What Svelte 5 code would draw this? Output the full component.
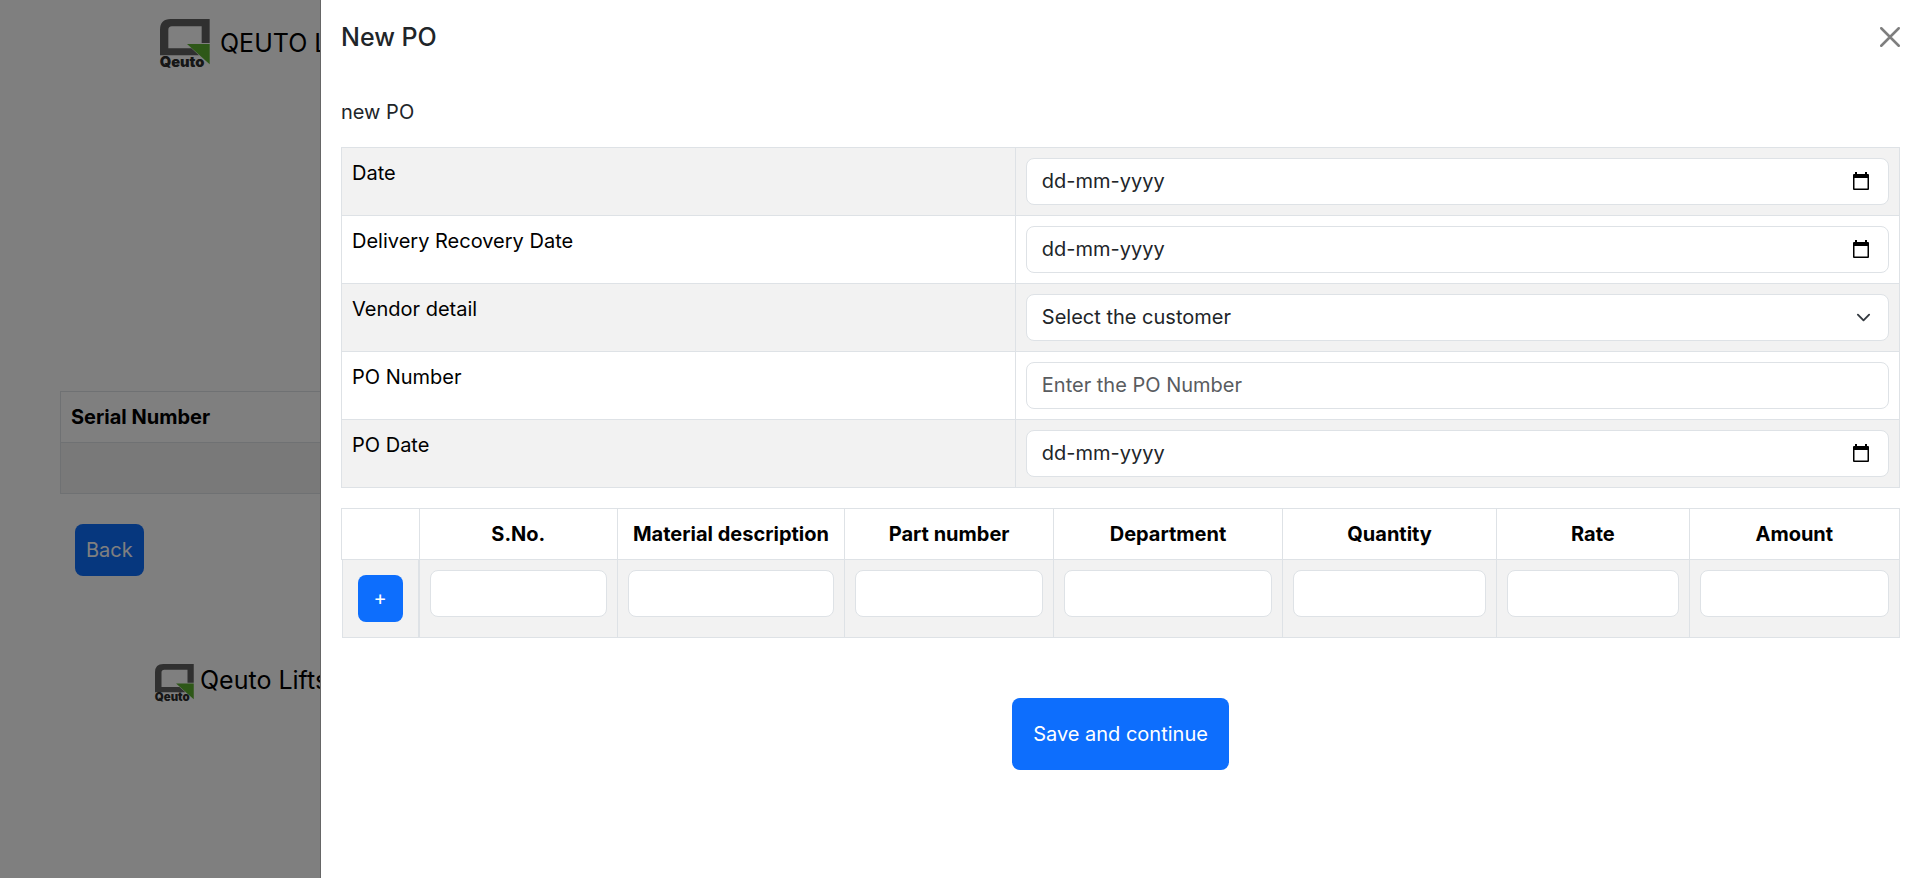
<script>
  const fields = [
    { id: 'date', label: 'Date', kind: 'date' },
    { id: 'recovery', label: 'Delivery Recovery Date', kind: 'date' },
    { id: 'vendor', label: 'Vendor detail', kind: 'select' },
    { id: 'number', label: 'PO Number', kind: 'text' },
    { id: 'po-date', label: 'PO Date', kind: 'date' }
  ];

  const columns = [
    { label: 'S.No.', width: 12.7 },
    { label: 'Material description', width: 14.6 },
    { label: 'Part number', width: 13.4 },
    { label: 'Department', width: 14.7 },
    { label: 'Quantity', width: 13.75 },
    { label: 'Rate', width: 12.35 },
    { label: 'Amount', width: 13.5 }
  ];

  let rows = $state([0]);
  let open = $state(true);
</script>

{#snippet logo()}
  <svg class="logo" viewBox="0 0 150 150" aria-hidden="true">
    <path fill="#606060" d="M32 0H149V72H125V22H36Q25 22 25 33V88H94L117 109H0V32Q0 0 32 0Z" />
    <path fill="#5cb030" d="M81 75H149V136Z" />
    <text x="-1" y="144" font-size="44" font-weight="900" fill="#2c2c2c">Qeuto</text>
  </svg>
{/snippet}

<div class="page">
  <header class="brand">
    {@render logo()}
    <span>QEUTO L</span>
  </header>

  <main>
    <table class="grid">
      <thead><tr><th>Serial Number</th></tr></thead>
      <tbody><tr><td class="blank"></td></tr></tbody>
    </table>
    <button class="btn back" type="button">Back</button>
  </main>

  <footer class="brand small">
    {@render logo()}
    <span>Qeuto Lifts</span>
  </footer>
</div>

{#if open}
  <div class="backdrop"></div>
  <section class="panel" role="dialog" aria-labelledby="panel-title">
    <div class="panel-head">
      <h5 id="panel-title">New PO</h5>
      <button class="close" type="button" aria-label="Close" onclick={() => (open = false)}>
        <svg viewBox="0 0 16 16" aria-hidden="true">
          <path d="M1 1L15 15M15 1L1 15" fill="none" stroke="#000" stroke-width="2" stroke-linecap="round" />
        </svg>
      </button>
    </div>

    <form class="panel-body" onsubmit={(e) => e.preventDefault()}>
      <p>new PO</p>

      <table class="grid details">
        <tbody>
          {#each fields as field}
            <tr>
              <td class="name"><label for={field.id}>{field.label}</label></td>
              <td>
                {#if field.kind === 'select'}
                  <div class="control">
                    <select id={field.id}>
                      <option>Select the customer</option>
                    </select>
                    <svg class="chevron" viewBox="0 0 16 16" aria-hidden="true">
                      <path d="M2 5l6 6 6-6" fill="none" stroke="#343a40" stroke-width="2" stroke-linecap="round" stroke-linejoin="round" />
                    </svg>
                  </div>
                {:else if field.kind === 'date'}
                  <div class="control">
                    <input class="date" id={field.id} type="text" placeholder="dd-mm-yyyy" />
                    <button class="calendar" type="button" aria-label="Choose a date">
                      <svg viewBox="0 0 16 18" aria-hidden="true">
                        <path d="M2 0h2v2h8V0h2v2h1q1 0 1 1v14q0 1-1 1H1q-1 0-1-1V3q0-1 1-1h1zM1.5 6v10.5h13V6z" fill="#000" fill-rule="evenodd" />
                      </svg>
                    </button>
                  </div>
                {:else}
                  <input id={field.id} type="text" placeholder="Enter the PO Number" />
                {/if}
              </td>
            </tr>
          {/each}
        </tbody>
      </table>

      <table class="grid items">
        <colgroup>
          <col style="width: 5%" />
          {#each columns as column}
            <col style="width: {column.width}%" />
          {/each}
        </colgroup>
        <thead>
          <tr>
            <th></th>
            {#each columns as column}
              <th>{column.label}</th>
            {/each}
          </tr>
        </thead>
        <tbody>
          {#each rows as row}
            <tr>
              <td class="add">
                <div>
                  <button class="btn" type="button" aria-label="Add row" onclick={() => rows.push(rows.length)}>+</button>
                </div>
              </td>
              {#each columns as column}
                <td><input type="text" aria-label={column.label} /></td>
              {/each}
            </tr>
          {/each}
        </tbody>
      </table>

      <button class="btn save" type="submit">Save and continue</button>
    </form>
  </section>
{/if}

<style>
  :global(body) {
    margin: 0;
    background: #fff;
    color: #212529;
    font: 20px/30px Inter, 'Liberation Sans', sans-serif;
  }

  :global(*) {
    box-sizing: border-box;
  }

  .page {
    color: #000;
  }

  .brand {
    display: flex;
    gap: 10px;
    padding: 19px 160px 0;
    font-size: 25px;
    line-height: 48px;
    white-space: nowrap;
  }

  .brand .logo {
    width: 50px;
    height: 50px;
    overflow: visible;
  }

  main {
    padding: 322px 60px 0;
  }

  .brand.small {
    gap: 6px;
    padding: 88px 155px 0;
    line-height: 32px;
  }

  .brand.small .logo {
    width: 39px;
    height: 39px;
  }

  .grid {
    width: 100%;
    border-collapse: collapse;
    color: #000;
  }

  th,
  td {
    padding: 10px;
    border: 1px solid #dee2e6;
    text-align: left;
    vertical-align: top;
  }

  th {
    font-weight: 700;
  }

  .blank {
    height: 51px;
    background: #f2f2f2;
  }

  .btn {
    border: 0;
    border-radius: 8px;
    background: #0d6efd;
    color: #fff;
    font: inherit;
    cursor: pointer;
  }

  .back {
    margin: 30px 15px 0;
    padding: 11px;
  }

  .backdrop {
    position: fixed;
    inset: 0;
    background: rgba(0, 0, 0, 0.5);
  }

  .panel {
    position: fixed;
    inset: 0 0 0 auto;
    width: calc(100% * 5 / 6);
    border-left: 1px solid #666;
    background: #fff;
    overflow: auto;
  }

  .panel-head {
    display: flex;
    align-items: center;
    justify-content: space-between;
    padding: 18px 20px;
  }

  h5 {
    margin: 0;
    font-size: 25px;
    font-weight: 500;
    line-height: 38px;
  }

  .close {
    display: flex;
    padding: 0;
    border: 0;
    background: none;
    opacity: 0.5;
    cursor: pointer;
  }

  .close svg {
    width: 20px;
    height: 20px;
  }

  .panel-body {
    padding: 23px 20px;
  }

  p {
    margin: 0 0 20px;
  }

  .name {
    width: 43.25%;
  }

  .details tr:nth-child(odd) td,
  .items td {
    background: #f2f2f2;
  }

  input,
  select {
    display: block;
    width: 100%;
    height: 47px;
    padding: 0 15px 2px;
    border: 1px solid #dee2e6;
    border-radius: 8px;
    background: #fff;
    color: #212529;
    font: inherit;
    appearance: none;
  }

  input::placeholder {
    color: #595c5f;
    opacity: 1;
  }

  .date::placeholder {
    color: #212529;
  }

  .control {
    display: grid;
    align-items: center;
  }

  .control > * {
    grid-area: 1 / 1;
  }

  .chevron,
  .calendar {
    justify-self: end;
  }

  .chevron {
    width: 15px;
    height: 15px;
    margin-right: 18px;
    pointer-events: none;
  }

  .calendar {
    display: flex;
    margin-right: 20px;
    padding: 0 0 2px;
    border: 0;
    background: none;
  }

  .calendar svg {
    width: 16px;
    height: 18px;
  }

  .items {
    margin-top: 20px;
    table-layout: fixed;
  }

  .items th {
    text-align: center;
    white-space: nowrap;
  }

  .items .add {
    padding: 0;
    border-left: 0;
  }

  .add div {
    height: 77px;
    padding: 15px;
    border: 1px solid #dee2e6;
    border-width: 0 1px;
  }

  .add .btn {
    width: 45px;
    height: 47px;
    padding: 0 0 2px;
  }

  .save {
    display: block;
    margin: 60px auto 0;
    padding: 21px;
  }
</style>
